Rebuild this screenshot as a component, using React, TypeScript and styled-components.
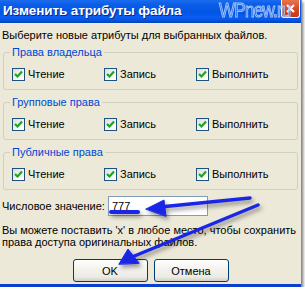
import React from 'react';
import styled, { createGlobalStyle } from 'styled-components';

const GlobalStyle = createGlobalStyle`
    html, body {
        margin: 0;
        padding: 0;
        background: #ffffff;
    }
    body {
        font-family: "Liberation Sans", Arial, sans-serif;
        font-size: 11px;
        color: #000;
    }
`;

const Window = styled.div`
    position: relative;
    width: 301px;
    background: #ece9d8;
    border-bottom: 3px solid #0a3fd0;
    box-shadow: 1px 0 0 #8c8c8c, 2px 2px 3px rgba(0, 0, 0, 0.55);
    display: flex;
    flex-direction: column;
`;

const TitleBar = styled.div`
    height: 23px;
    display: flex;
    align-items: center;
    justify-content: space-between;
    padding: 0 1px 0 3px;
    background: linear-gradient(to bottom, #1b6cf0 0%, #0a5de6 20%, #0055e5 55%, #0a5ef2 75%, #0552dc 90%, #0340b8 100%);
    border-bottom: 1px solid #e8eefb;
`;

const Title = styled.span`
    color: #fff;
    font-weight: bold;
    font-size: 13.5px;
    letter-spacing: -0.1px;
    text-shadow: 1px 1px 0 #0a2a8a;
    margin-top: -2px;
`;

const CloseButton = styled.div`
    width: 19px;
    height: 18px;
    margin-top: -5px;
    box-sizing: border-box;
    border: 1px solid #fff;
    border-top: none;
    border-radius: 0 0 3px 3px;
    background: linear-gradient(to bottom, #e8754f, #d4451f 60%, #c23a18);
    display: flex;
    align-items: center;
    justify-content: center;
`;

// watermark lies over the title bar and the close button
const Watermark = styled.span`
    position: absolute;
    top: -1px;
    left: 219px;
    z-index: 2;
    font-family: "Liberation Sans", Arial, sans-serif;
    font-size: 20px;
    letter-spacing: -1px;
    transform: scaleX(0.86);
    transform-origin: left top;
    color: rgba(60, 120, 240, 0.3);
    -webkit-text-stroke: 1px rgba(175, 205, 255, 0.9);
    pointer-events: none;
`;

const Body = styled.div`
    display: flex;
    flex-direction: column;
    padding: 5px 0 2px;
`;

const Intro = styled.div`
    padding-left: 2px;
    line-height: 13px;
    margin-bottom: 4px;
`;

const Groups = styled.div`
    display: flex;
    flex-direction: column;
    gap: 6px;
`;

const Group = styled.fieldset`
    margin: 0 3px;
    padding: 9px 8px 8px;
    border: 1px solid #d0d0bf;
    border-radius: 3px;
    min-width: 0;
`;

const Legend = styled.legend`
    color: #0046d5;
    padding: 0 2px;
    margin-left: -2px;
    line-height: 13px;
`;

const CheckRow = styled.div`
    display: grid;
    grid-template-columns: repeat(3, 92px);
`;

const CheckItem = styled.label`
    display: flex;
    align-items: center;
    gap: 3px;
    line-height: 13px;
`;

const Box = styled.span`
    width: 13px;
    height: 13px;
    box-sizing: border-box;
    border: 1px solid #1c5180;
    background: linear-gradient(135deg, #dcdcd7, #fff 80%);
    display: flex;
    align-items: center;
    justify-content: center;
`;

const ValueRow = styled.div`
    display: flex;
    align-items: center;
    margin-top: 6px;
    padding-left: 2px;
`;

const ValueLabel = styled.span`
    width: 106px;
`;

const ValueInput = styled.div`
    width: 100px;
    height: 20px;
    box-sizing: border-box;
    border: 1px solid #7f9db9;
    background: #fff;
    padding: 0 3px;
    display: flex;
    align-items: center;
`;

const Hint = styled.div`
    margin-top: 8px;
    padding-left: 2px;
    line-height: 12px;
`;

const Buttons = styled.div`
    display: flex;
    justify-content: center;
    gap: 6px;
    margin-top: 11px;
`;

const Button = styled.div`
    width: 75px;
    height: 23px;
    box-sizing: border-box;
    border: 1px solid #003c74;
    border-radius: 3px;
    background: linear-gradient(to bottom, #fff 0%, #f4f3ee 40%, #ecebe5 80%, #d6d0c5 100%);
    display: flex;
    align-items: center;
    justify-content: center;
`;

const Arrows = styled.svg`
    position: absolute;
    left: 0;
    top: 0;
    z-index: 3;
    pointer-events: none;
    filter: drop-shadow(2px 3px 2px rgba(0, 0, 0, 0.4));
`;

const Check = () => (
    <svg width="9" height="9" viewBox="0 0 9 9">
        <path d="M1 4 L3.5 6.5 L8 1.5" fill="none" stroke="#21a121" strokeWidth="2.2" />
    </svg>
);

const CheckBox = ({ label }: { label: string }) => (
    <CheckItem>
        <Box><Check /></Box>
        {label}
    </CheckItem>
);

const groups = ["Права владельца", "Групповые права", "Публичные права"];
const rights = ["Чтение", "Запись", "Выполнить"];

export default function App() {
    return (
        <>
            <GlobalStyle />
            <Window>
                <TitleBar>
                    <Title>Изменить атрибуты файла</Title>
                    <CloseButton>
                        <svg width="11" height="11" viewBox="0 0 11 11">
                            <path d="M2 2 L9 9 M9 2 L2 9" stroke="#fff" strokeWidth="2.2" />
                        </svg>
                    </CloseButton>
                </TitleBar>
                <Watermark>WPnew.ru</Watermark>
                <Body>
                    <Intro>Выберите новые атрибуты для выбранных файлов.</Intro>
                    <Groups>
                        {groups.map(g => (
                            <Group key={g}>
                                <Legend>{g}</Legend>
                                <CheckRow>
                                    {rights.map(r => <CheckBox key={r} label={r} />)}
                                </CheckRow>
                            </Group>
                        ))}
                    </Groups>
                    <ValueRow>
                        <ValueLabel>Числовое значение:</ValueLabel>
                        <ValueInput>777</ValueInput>
                    </ValueRow>
                    <Hint>
                        Вы можете поставить 'x' в любое место, чтобы сохранить<br />
                        права доступа оригинальных файлов.
                    </Hint>
                    <Buttons>
                        <Button>OK</Button>
                        <Button>Отмена</Button>
                    </Buttons>
                </Body>
                <Arrows width="305" height="289" viewBox="0 0 305 289">
                    <g fill="#1a26e6" stroke="#1a26e6" strokeLinecap="round" strokeLinejoin="round">
                        <path d="M111 212 L138 212" strokeWidth="4" fill="none" />
                        <path d="M250 198 L160 207" strokeWidth="3.5" fill="none" />
                        <path d="M146 209 L164 200 L166 216 Z" strokeWidth="1" />
                        <path d="M258 205 L132 257" strokeWidth="3.5" fill="none" />
                        <path d="M119 264 L128 249 L139 263 Z" strokeWidth="1" />
                    </g>
                </Arrows>
            </Window>
        </>
    );
}
